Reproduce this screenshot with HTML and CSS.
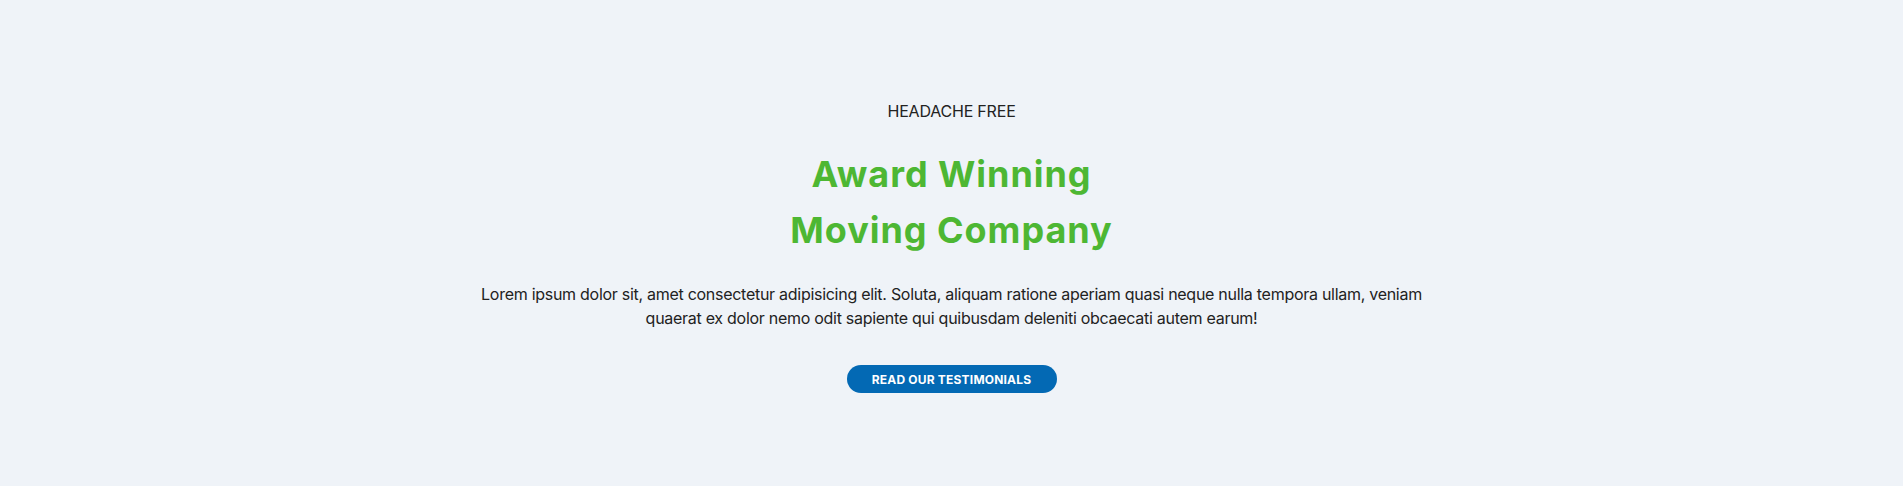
FILE: index.html
```html
<!DOCTYPE html>
<html lang="en">
<head>
<meta charset="utf-8">
<title>Award Winning Moving Company</title>
<link rel="stylesheet" href="styles.css">
</head>
<body>
<section class="hero">
  <p class="eyebrow">HEADACHE FREE</p>
  <h1 class="title">Award Winning<br>Moving Company</h1>
  <p class="lead">Lorem ipsum dolor sit, amet consectetur adipisicing elit. Soluta, aliquam ratione aperiam quasi neque nulla tempora ullam, veniam quaerat ex dolor nemo odit sapiente qui quibusdam deleniti obcaecati autem earum!</p>
  <a class="btn" href="#">READ OUR TESTIMONIALS</a>
</section>
</body>
</html>
```
FILE: styles.css
```css
html, body {
  margin: 0;
  padding: 0;
}
body {
  background: #eff3f8;
  font-family: Inter, "Noto Sans", sans-serif;
  color: #222;
  height: 486px;
}
.hero {
  display: flex;
  flex-direction: column;
  align-items: center;
  text-align: center;
  padding-top: 100px;
}
.eyebrow {
  margin: 0;
  font-size: 16px;
  line-height: 22px;
  letter-spacing: -0.2px;
  color: #222;
}
.title {
  margin: 24px 0 0;
  font-size: 36px;
  line-height: 56px;
  font-weight: 700;
  letter-spacing: 0.95px;
  color: #4db733;
}
.lead {
  margin: 24px 0 0;
  max-width: 960px;
  font-size: 16px;
  line-height: 24px;
  letter-spacing: -0.28px;
  color: #222;
}
.btn {
  margin-top: 35px;
  display: inline-flex;
  align-items: center;
  justify-content: center;
  width: 210px;
  height: 28px;
  border-radius: 14px;
  background: #0369b4;
  color: #fff;
  font-size: 12px;
  font-weight: 700;
  letter-spacing: 0.2px;
  text-decoration: none;
}
```
